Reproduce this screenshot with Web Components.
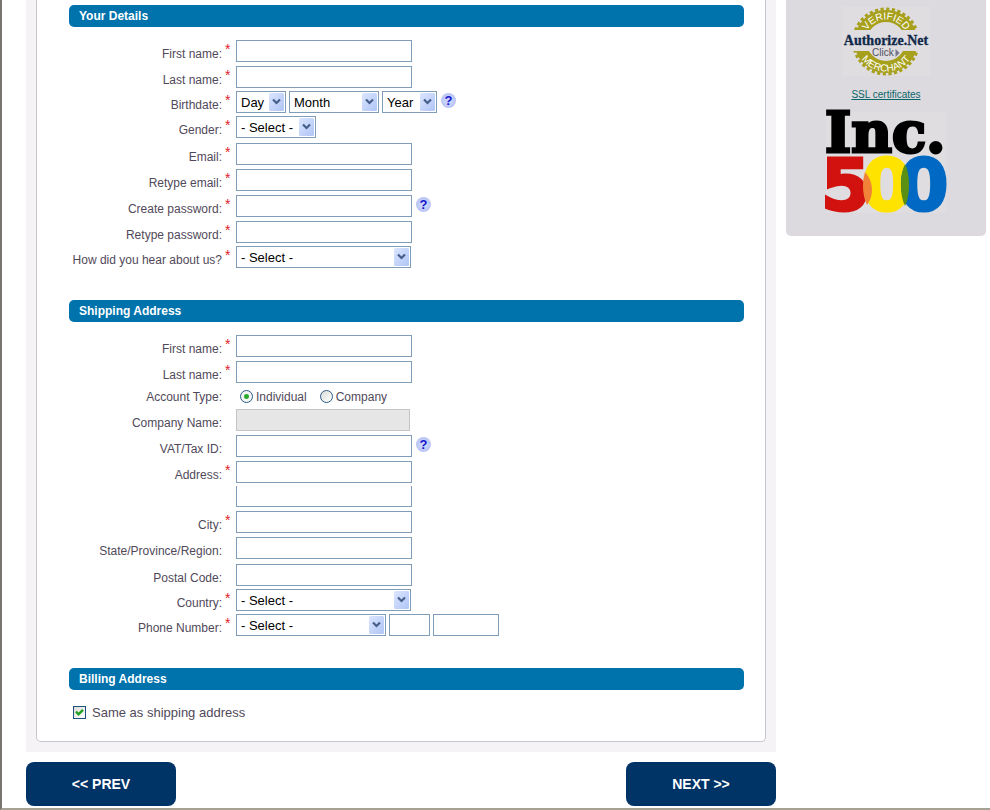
<!DOCTYPE html>
<html lang="en">
<head>
<meta charset="utf-8">
<title>Your Details</title>
<style>
  body {
    margin: 0;
    font-family: "Liberation Sans", Arial, sans-serif;
    font-size: 12px;
    color: #51495a;
    background: #fff;
  }
</style>
</head>
<body>

<signup-page>
  <details-form>
    <form-section heading="Your Details">
      <text-row label="First name:" required></text-row>
      <text-row label="Last name:" required></text-row>
      <birthdate-row label="Birthdate:" required help></birthdate-row>
      <select-row label="Gender:" required size="small"></select-row>
      <text-row label="Email:" required type="email"></text-row>
      <text-row label="Retype email:" required type="email"></text-row>
      <text-row label="Create password:" required type="password" help></text-row>
      <text-row label="Retype password:" required type="password"></text-row>
      <select-row label="How did you hear about us?" required></select-row>
    </form-section>
    <form-section heading="Shipping Address">
      <text-row label="First name:" required></text-row>
      <text-row label="Last name:" required></text-row>
      <account-type-row label="Account Type:"></account-type-row>
      <text-row label="Company Name:" disabled></text-row>
      <text-row label="VAT/Tax ID:" help></text-row>
      <text-row label="Address:" required></text-row>
      <text-row continued></text-row>
      <text-row label="City:" required></text-row>
      <text-row label="State/Province/Region:"></text-row>
      <text-row label="Postal Code:" class="postal"></text-row>
      <select-row label="Country:" required></select-row>
      <phone-row label="Phone Number:" required></phone-row>
    </form-section>
    <form-section heading="Billing Address">
      <check-row>Same as shipping address</check-row>
    </form-section>
  </details-form>
  <nav-button slot="actions">&lt;&lt; PREV</nav-button>
  <nav-button slot="actions">NEXT &gt;&gt;</nav-button>
  <trust-panel slot="aside"></trust-panel>
</signup-page>

<template id="signup-page">
  <style>
    :host {
      display: block;
      box-sizing: border-box;
      min-height: 100vh;
      border-left: 2px solid #77756e;
      border-bottom: 2px solid #a5a294;
      padding: 0 4px 2px 24px;
    }
    .columns {
      display: grid;
      grid-template-columns: minmax(0, 750px) 200px;
      gap: 10px;
      align-items: start;
    }
    .actions {
      display: flex;
      justify-content: space-between;
      margin-top: 10px;
    }
  </style>
  <div class="columns">
    <main>
      <slot></slot>
      <div class="actions"><slot name="actions"></slot></div>
    </main>
    <slot name="aside"></slot>
  </div>
</template>

<template id="details-form">
  <style>
    :host {
      display: block;
      background: #f5f3f5;
      padding: 0 10px 10px;
    }
    form {
      border: 1px solid #c9c6cb;
      border-top: 0;
      border-radius: 0 0 5px 5px;
      background: #fff;
      padding: 5px 21px 18px 32px;
    }
  </style>
  <form><slot></slot></form>
</template>

<template id="form-section">
  <style>
    :host { display: block; }
    :host(:not(:first-child)) { margin-top: 28px; }
    h2 {
      margin: 0 0 13px;
      padding-left: 10px;
      border-radius: 5px;
      background: #0072ac;
      color: #fff;
      font-size: 12px;
      line-height: 22px;
    }
    .rows {
      display: flex;
      flex-direction: column;
    }
  </style>
  <h2></h2>
  <div class="rows"><slot></slot></div>
</template>

<template id="form-row">
  <style>
    :host {
      display: block;
      margin-bottom: 4px;
    }
    :host(select-row), :host(birthdate-row), :host(phone-row) { margin-top: -1px; }
    :host([size="small"]) { margin-bottom: 5px; }
    :host(.postal) { margin-top: 1px; }
    :host([continued]) { margin-top: -1px; }
    .row {
      display: grid;
      grid-template-columns: 153px 14px 1fr;
    }
    .name {
      padding-top: 6px;
      line-height: 16px;
      text-align: right;
      white-space: nowrap;
    }
    .star {
      padding-left: 3px;
      font-size: 14px;
      line-height: 18px;
      height: 18px;
      color: #e0202c;
    }
    .controls {
      display: flex;
      align-items: center;
      gap: 3px;
    }
    input.text {
      box-sizing: border-box;
      width: 176px;
      height: 22px;
      margin: 0;
      border: 1px solid #7f9db9;
      padding: 0 4px;
      background: #fff;
      font: 13px "Liberation Sans", sans-serif;
    }
    input.text:disabled {
      width: 174px;
      border-color: #c4c4c2;
      background: #e6e6e6;
    }
    :host([continued]) input.text {
      height: 21px;
      border-top: 0;
    }
    input.text.area { width: 41px; }
    input.text.number { width: 66px; }
    .select {
      display: grid;
      align-items: center;
      width: 175px;
    }
    .select > * { grid-area: 1 / 1; }
    .select svg {
      justify-self: end;
      margin-right: 2px;
      pointer-events: none;
    }
    .day { width: 50px; }
    .month { width: 90px; }
    .year { width: 55px; }
    .small { width: 80px; }
    .prefix { width: 150px; }
    select {
      appearance: none;
      box-sizing: border-box;
      width: 100%;
      height: 22px;
      margin: 0;
      border: 1px solid #7f9db9;
      border-radius: 0;
      padding: 0 0 0 4px;
      background: #fff;
      color: #000;
      font: 13px "Liberation Sans", sans-serif;
    }
    .help {
      display: block;
      width: 15px;
      height: 15px;
      margin: 0 0 3px 1px;
      border: 0;
      border-radius: 50%;
      padding: 0;
      background: radial-gradient(#c9d5fb 30%, #a9b4ee);
      color: #1414cc;
      font: bold 13px/15px "Liberation Sans", sans-serif;
    }
    .choice {
      display: flex;
      align-items: center;
      gap: 3px;
      margin: 0 10px 0 4px;
      line-height: 18px;
    }
    .choice + .choice { margin-left: 0; }
    .choice input {
      appearance: none;
      box-sizing: border-box;
      width: 13px;
      height: 13px;
      margin: 0 0 1px;
      border: 1px solid #2c5a88;
      border-radius: 50%;
      background: linear-gradient(135deg, #dcdcd7, #fff);
    }
    .choice input:checked {
      background: radial-gradient(circle, #2fa82f 0 2px, #f3f5f3 3px);
    }
    /* radios are shorter than a text box, so their label moves up */
    :host(account-type-row) .name {
      padding-top: 2px;
    }
    :host(account-type-row) .controls {
      padding-top: 2px;
      height: 16px;
    }
  </style>
  <div class="row">
    <label class="name" for="control"></label>
    <span class="star"></span>
    <div class="controls"></div>
  </div>
</template>

<template id="check-row">
  <style>
    :host {
      display: block;
      font-size: 13px;
    }
    label {
      display: flex;
      align-items: center;
      gap: 6px;
      padding-left: 4px;
      line-height: 20px;
    }
    .box { display: grid; margin-bottom: 2px; }
    .box > * { grid-area: 1 / 1; }
    input {
      appearance: none;
      box-sizing: border-box;
      width: 13px;
      height: 13px;
      margin: 0;
      border: 1px solid #1c5180;
      background: linear-gradient(135deg, #dcdcd7, #fff);
    }
    svg { pointer-events: none; }
    input:not(:checked) + svg { display: none; }
  </style>
  <label>
    <span class="box">
      <input type="checkbox" checked>
      <svg width="13" height="13"><path d="M3 5.5 L5.5 8.3 L10 3.8" fill="none" stroke="#21a121" stroke-width="2.4"/></svg>
    </span>
    <slot></slot>
  </label>
</template>

<template id="nav-button">
  <style>
    :host { display: block; }
    button {
      display: block;
      width: 150px;
      height: 44px;
      border: 0;
      border-radius: 8px;
      background: #003366;
      color: #fff;
      font: bold 14px "Liberation Sans", sans-serif;
    }
  </style>
  <button type="button"><slot></slot></button>
</template>

<template id="trust-panel">
  <style>
    :host {
      display: flex;
      flex-direction: column;
      align-items: center;
      box-sizing: border-box;
      padding: 7px 0 22px;
      border-radius: 0 0 5px 5px;
      background: #dddadf;
    }
    svg {
      display: block;
      overflow: visible;
    }
    a {
      margin: 11px 0 9px;
      color: #0b6569;
      font-size: 10px;
      line-height: 16px;
    }
  </style>
  <svg width="88" height="69" viewBox="0 0 88 69" role="img" aria-label="Authorize.Net verified merchant">
    <defs>
      <clipPath id="bands"><path d="M0 0H88V23H0ZM0 44H88V69H0Z"/></clipPath>
      <path id="top-arc" d="M22 34.5A22 22 0 0 1 66 34.5"/>
      <path id="bottom-arc" d="M14 34.5A30 30 0 0 0 74 34.5"/>
    </defs>
    <rect width="88" height="69" fill="#dfdde0"/>
    <g clip-path="url(#bands)" fill="none" stroke="#a7a01c">
      <circle cx="44" cy="34.5" r="25.5" stroke-width="12"/>
      <circle cx="44" cy="34.5" r="32.5" stroke-width="3" stroke-dasharray="3.2 2.47"/>
    </g>
    <g fill="#fff" font-family="Liberation Sans" font-size="10" text-anchor="middle">
      <text><textPath href="#top-arc" startOffset="50%">VERIFIED</textPath></text>
      <text><textPath href="#bottom-arc" startOffset="50%">MERCHANT</textPath></text>
    </g>
    <text x="44" y="38" text-anchor="middle" font-family="Liberation Serif" font-weight="bold" font-size="14" fill="#10294a" stroke="#10294a" stroke-width=".3">Authorize.Net</text>
    <text x="30" y="49" font-family="Liberation Sans" font-size="10" fill="#505060">Click</text>
    <path d="M53.5 42V50L57.5 46Z" fill="#77758a"/>
  </svg>
  <a href="#">SSL certificates</a>
  <svg width="122" height="102" viewBox="0 0 122 102" role="img" aria-label="Inc. 500">
    <rect x="1" width="120" height="101" fill="#dfdde0"/>
    <text x="0" y="40" font-family="DejaVu Serif" font-weight="bold" font-size="56" stroke="#000" stroke-width="3">Inc.</text>
    <g font-family="DejaVu Sans" font-weight="bold" font-size="71" stroke-width="3">
      <text x="-4" y="98" fill="#d1120f" stroke="#d1120f">5</text>
      <text x="37" y="98" fill="#ffe300" stroke="#ffe300">0</text>
      <text x="74" y="98" fill="#0069c3" stroke="#0069c3">0</text>
    </g>
    <path d="M40 60Q47 68 47 78Q47 86 42 93Q38 85 38 74Q38 66 40 60Z" fill="#f08337"/>
    <path d="M80 52Q84 60 84 73Q84 86 80 94Q76 86 76 73Q76 60 80 52Z" fill="#5c9012"/>
  </svg>
</template>

<script>
// Clones the template named after the element into its shadow root
class TemplateElement extends HTMLElement {
    constructor() {
        super();
        const tmpl = document.getElementById(this.templateName);
        this.attachShadow({mode: 'open'}).appendChild(tmpl.content.cloneNode(true));
    }

    get templateName() {
        return this.localName;
    }
}

class FormSection extends TemplateElement {
    connectedCallback() {
        this.shadowRoot.querySelector('h2').textContent = this.getAttribute('heading');
    }
}

// Base of all rows: label, required star and the controls of the subclass
class FormRow extends TemplateElement {
    get templateName() {
        return 'form-row';
    }

    connectedCallback() {
        const label = this.getAttribute('label');
        this.shadowRoot.querySelector('.name').textContent = label;
        if (this.hasAttribute('required')) {
            this.shadowRoot.querySelector('.star').textContent = '*';
        }
        let html = this.controls();
        if (this.hasAttribute('help')) {
            html += '<button type="button" class="help" aria-label="Help">?</button>';
        }
        this.shadowRoot.querySelector('.controls').innerHTML = html;
    }

    select(text, size, attrs) {
        return `<span class="select ${size}">
            <select ${attrs}><option>${text}</option></select>
            <svg width="15" height="18">
              <defs><linearGradient id="face" x2="1" y2="1">
                <stop stop-color="#dbe5fe"/><stop offset="1" stop-color="#afc5f6"/>
              </linearGradient></defs>
              <rect width="15" height="18" rx="1.5" fill="url(#face)"/>
              <path d="M4 6.5 L7.5 10 L11 6.5" fill="none" stroke="#455f8a" stroke-width="2.2"/>
            </svg></span>`;
    }
}

class TextRow extends FormRow {
    controls() {
        const type = this.getAttribute('type') || 'text';
        const disabled = this.hasAttribute('disabled') ? 'disabled' : '';
        const name = this.hasAttribute('continued') ? 'aria-label="Address line 2"' : '';
        return `<input id="control" class="text" type="${type}" ${name} ${disabled}>`;
    }
}

class SelectRow extends FormRow {
    controls() {
        return this.select('- Select -', this.getAttribute('size') || '', 'id="control"');
    }
}

class BirthdateRow extends FormRow {
    controls() {
        return this.select('Day', 'day', 'id="control"')
            + this.select('Month', 'month', 'aria-label="Month"')
            + this.select('Year', 'year', 'aria-label="Year"');
    }
}

class PhoneRow extends FormRow {
    controls() {
        return this.select('- Select -', 'prefix', 'id="control"')
            + '<input class="text area" type="tel" aria-label="Area code">'
            + '<input class="text number" type="tel" aria-label="Number">';
    }
}

class AccountTypeRow extends FormRow {
    controls() {
        return `<label class="choice"><input id="control" type="radio" name="account" checked>Individual</label>
            <label class="choice"><input type="radio" name="account">Company</label>`;
    }
}

customElements.define('signup-page', class extends TemplateElement {});
customElements.define('details-form', class extends TemplateElement {});
customElements.define('form-section', FormSection);
customElements.define('text-row', TextRow);
customElements.define('select-row', SelectRow);
customElements.define('birthdate-row', BirthdateRow);
customElements.define('phone-row', PhoneRow);
customElements.define('account-type-row', AccountTypeRow);
customElements.define('check-row', class extends TemplateElement {});
customElements.define('nav-button', class extends TemplateElement {});
customElements.define('trust-panel', class extends TemplateElement {});
</script>
</body>
</html>
